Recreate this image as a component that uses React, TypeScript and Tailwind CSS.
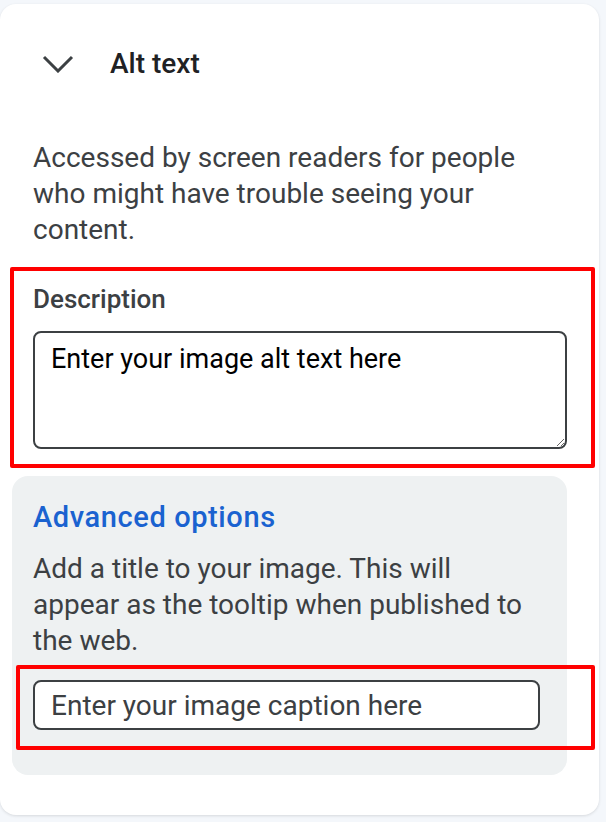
import { useState } from "react";

const font = { fontFamily: "Roboto, 'Liberation Sans', sans-serif" };

const AltTextPanel = () => {
  const [description, setDescription] = useState("Enter your image alt text here");
  const [caption, setCaption] = useState("Enter your image caption here");

  return (
    <div className="min-h-[822px] w-[606px] bg-[#f4f7fb] pt-[4px]" style={font}>
      <div className="relative h-[811px] w-[599px] rounded-2xl bg-white pl-[12px] pr-[32px] pt-[44px] shadow-[0_1px_3px_rgba(0,0,0,0.12)]">
        {/* Header */}
        <div className="flex h-[32px] items-center pl-[30px]">
          <svg width="32" height="18" viewBox="0 0 32 18" fill="none" className="mt-[-1px]">
            <path d="M2 2 L16 16 L30 2" stroke="#3c4043" strokeWidth="3" />
          </svg>
          <h2 className="ml-[36px] text-[28px] leading-[32px] font-medium text-[#202124]">Alt text</h2>
        </div>

        <p className="mt-[60px] pl-[21px] text-[28px] leading-[36px] text-[#3c4043]">
          Accessed by screen readers for people who might have trouble seeing your content.
        </p>

        {/* Description */}
        <div className="pl-[21px]">
          <label className="mt-[35px] block text-[26px] leading-[32px] font-medium text-[#3c4043]">
            Description
          </label>
          <textarea
            value={description}
            onChange={(e) => setDescription(e.target.value)}
            className="mt-[16px] block h-[118px] w-full rounded-lg border-2 border-[#3c4043] px-[16px] pt-[10px] text-[27px] leading-[32px] text-black outline-none"
            style={font}
          />
        </div>

        {/* Advanced options */}
        <div className="mt-[27px] rounded-2xl bg-[#eef1f2] pl-[21px] pr-[27px] pt-[23px] pb-[45px]">
          <h3 className="text-[29px] leading-[36px] font-medium tracking-[0.6px] text-[#1a62d0]">Advanced options</h3>
          <p className="mt-[16px] text-[28px] leading-[36px] text-[#3c4043]">
            Add a title to your image. This will appear as the tooltip when published to the web.
          </p>
          <input
            value={caption}
            onChange={(e) => setCaption(e.target.value)}
            className="mt-[21px] block h-[50px] w-full rounded-lg border-2 border-[#3c4043] bg-white px-[16px] text-[28px] text-[#3c4043] outline-none"
            style={font}
          />
        </div>

        {/* Annotation boxes */}
        <div className="pointer-events-none absolute left-[10px] top-[263px] h-[201px] w-[585px] rounded-[2px] border-4 border-[#ff0000]" />
        <div className="pointer-events-none absolute left-[16px] top-[661px] h-[85px] w-[579px] rounded-[2px] border-4 border-[#ff0000]" />
      </div>
    </div>
  );
};

export default function App() {
  return <AltTextPanel />;
}
